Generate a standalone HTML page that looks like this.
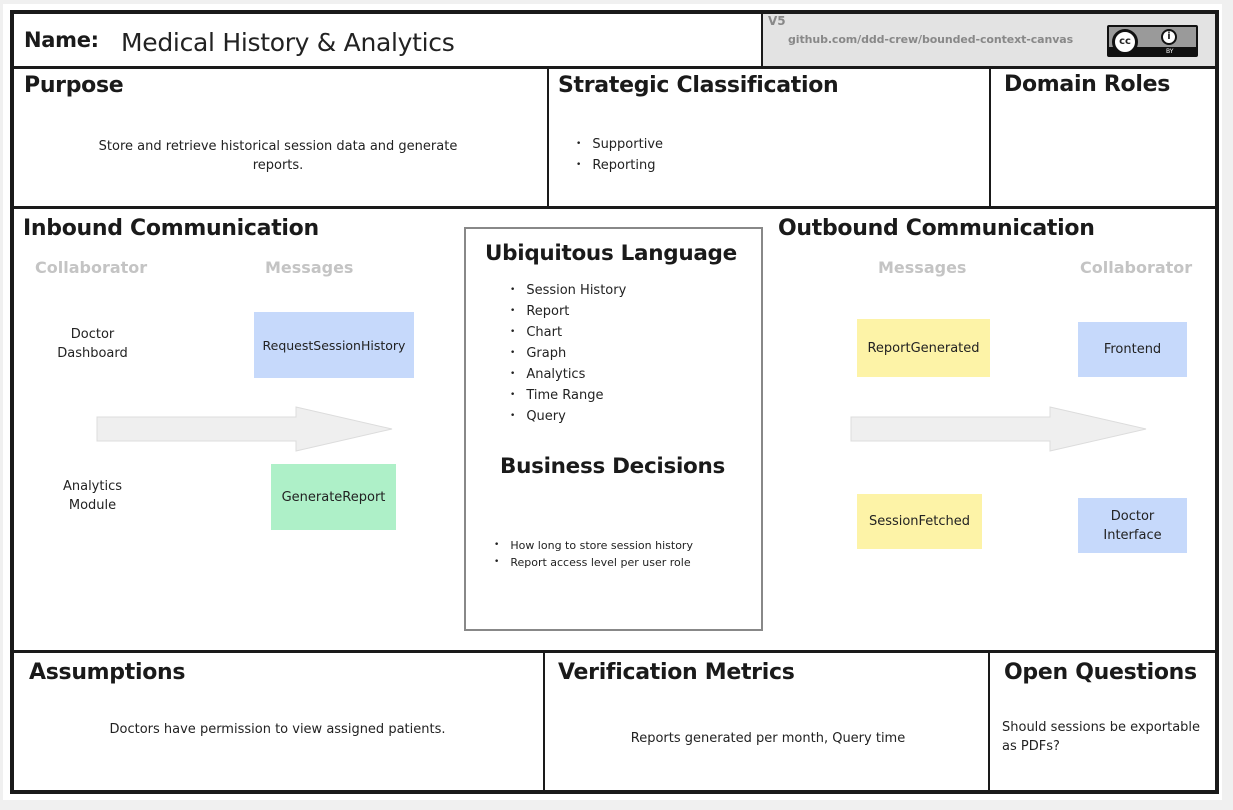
<!DOCTYPE html>
<html><head><meta charset="utf-8"><style>
*{margin:0;padding:0;box-sizing:border-box}
body{width:1233px;height:810px;background:#f0f0f0;position:relative;overflow:hidden;font-family:"DejaVu Sans","Liberation Sans",sans-serif;color:#222}
.a{position:absolute}
.white{left:3px;top:4px;width:1219px;height:796px;background:#fff}
.frame{left:10px;top:10px;width:1209px;height:784px;border:4px solid #1a1a1a}
.hl{position:absolute;background:#1a1a1a;height:3px}
.vl{position:absolute;background:#1a1a1a;width:2px}
h2{position:absolute;font-size:22px;font-weight:bold;color:#1a1a1a;letter-spacing:-0.3px;white-space:nowrap}
.t{position:absolute;font-size:13px;color:#222;text-align:center;line-height:19px}
.sub{position:absolute;font-size:16px;font-weight:bold;color:#c4c4c4}
.st{position:absolute;font-size:13px;display:flex;align-items:center;justify-content:center;text-align:center;line-height:19px}
ul{list-style:none;position:absolute;font-size:13px;line-height:19px}
ul li:before{content:"•";font-size:9px;margin-right:11px;position:relative;top:-2px}
</style></head><body>
<div class="a white"></div>
<div class="a" style="left:762px;top:12px;width:453px;height:55px;background:#e3e3e3"></div>
<div class="a frame"></div>
<div class="hl" style="left:12px;top:66px;width:1205px"></div>
<div class="vl" style="left:761px;top:12px;height:55px"></div>
<div class="hl" style="left:12px;top:206px;width:1205px"></div>
<div class="vl" style="left:547px;top:68px;height:139px"></div>
<div class="vl" style="left:989px;top:68px;height:139px"></div>
<div class="hl" style="left:12px;top:650px;width:1205px"></div>
<div class="vl" style="left:543px;top:652px;height:140px"></div>
<div class="vl" style="left:988px;top:652px;height:140px"></div>

<h2 style="left:24px;top:28px;font-size:21px">Name:</h2>
<div class="a" style="left:121px;top:28px;font-size:25px;color:#222;letter-spacing:-0.3px">Medical History &amp; Analytics</div>
<div class="a" style="left:768px;top:14px;font-size:12px;font-weight:bold;color:#888">V5</div>
<div class="a" style="left:788px;top:33px;font-size:11px;font-weight:bold;color:#888;letter-spacing:-0.1px">github.com/ddd-crew/bounded-context-canvas</div>
<div class="a" style="left:1107px;top:25px;width:91px;height:32px;background:#9a9a9a;border:2px solid #111;border-radius:2px;overflow:hidden">
 <div class="a" style="left:0;top:20px;width:91px;height:10px;background:#111"></div>
 <div class="a" style="left:3px;top:2px;width:26px;height:26px;border-radius:50%;background:#fff;border:3px solid #111;font-size:10px;font-weight:bold;text-align:center;line-height:20px">cc</div>
 <div class="a" style="left:52px;top:2px;width:16px;height:16px;border-radius:50%;background:#fff;border:2px solid #111;font-size:10px;font-weight:bold;text-align:center;line-height:12px">i</div>
 <div class="a" style="left:57px;top:21px;font-size:6px;color:#fff">BY</div>
</div>

<h2 style="left:24px;top:73px">Purpose</h2>
<div class="t" style="left:90px;top:137px;width:376px">Store and retrieve historical session data and generate reports.</div>
<h2 style="left:558px;top:73px">Strategic Classification</h2>
<ul style="left:576px;top:135px"><li>Supportive</li><li>Reporting</li></ul>
<h2 style="left:1004px;top:72px">Domain Roles</h2>

<h2 style="left:23px;top:216px">Inbound Communication</h2>
<div class="sub" style="left:35px;top:258px">Collaborator</div>
<div class="sub" style="left:265px;top:258px">Messages</div>
<div class="t" style="left:40px;top:325px;width:105px">Doctor Dashboard</div>
<div class="st" style="left:254px;top:312px;width:160px;height:66px;background:#c6d9fb;font-size:12.5px">RequestSessionHistory</div>
<svg class="a" style="left:96px;top:406px" width="298" height="46"><polygon points="1,11 200,11 200,1 296,23 200,45 200,35 1,35" fill="#efefef" stroke="#dcdcdc"/></svg>
<div class="t" style="left:40px;top:477px;width:105px">Analytics Module</div>
<div class="st" style="left:271px;top:464px;width:125px;height:66px;background:#aef0c8">GenerateReport</div>

<div class="a" style="left:464px;top:227px;width:299px;height:404px;border:2px solid #888"></div>
<h2 style="left:485px;top:241px;font-size:21.5px">Ubiquitous Language</h2>
<ul style="left:510px;top:281px"><li>Session History</li><li>Report</li><li>Chart</li><li>Graph</li><li>Analytics</li><li>Time Range</li><li>Query</li></ul>
<h2 style="left:500px;top:454px;font-size:21.5px">Business Decisions</h2>
<ul style="left:494px;top:538px;font-size:11px;line-height:15px"><li>How long to store session history</li><li>Report access level per user role</li></ul>

<h2 style="left:778px;top:216px">Outbound Communication</h2>
<div class="sub" style="left:878px;top:258px">Messages</div>
<div class="sub" style="left:1080px;top:258px">Collaborator</div>
<div class="st" style="left:857px;top:319px;width:133px;height:58px;background:#fdf3a7">ReportGenerated</div>
<div class="st" style="left:1078px;top:322px;width:109px;height:55px;background:#c6d9fb">Frontend</div>
<svg class="a" style="left:850px;top:406px" width="298" height="46"><polygon points="1,11 200,11 200,1 296,23 200,45 200,35 1,35" fill="#efefef" stroke="#dcdcdc"/></svg>
<div class="st" style="left:857px;top:494px;width:125px;height:55px;background:#fdf3a7">SessionFetched</div>
<div class="st" style="left:1078px;top:498px;width:109px;height:55px;background:#c6d9fb">Doctor<br>Interface</div>

<h2 style="left:29px;top:660px">Assumptions</h2>
<div class="t" style="left:30px;top:720px;width:495px">Doctors have permission to view assigned patients.</div>
<h2 style="left:558px;top:660px">Verification Metrics</h2>
<div class="t" style="left:560px;top:729px;width:416px">Reports generated per month, Query time</div>
<h2 style="left:1004px;top:660px">Open Questions</h2>
<div class="t" style="left:1002px;top:718px;width:210px;text-align:left">Should sessions be exportable as PDFs?</div>
</body></html>
